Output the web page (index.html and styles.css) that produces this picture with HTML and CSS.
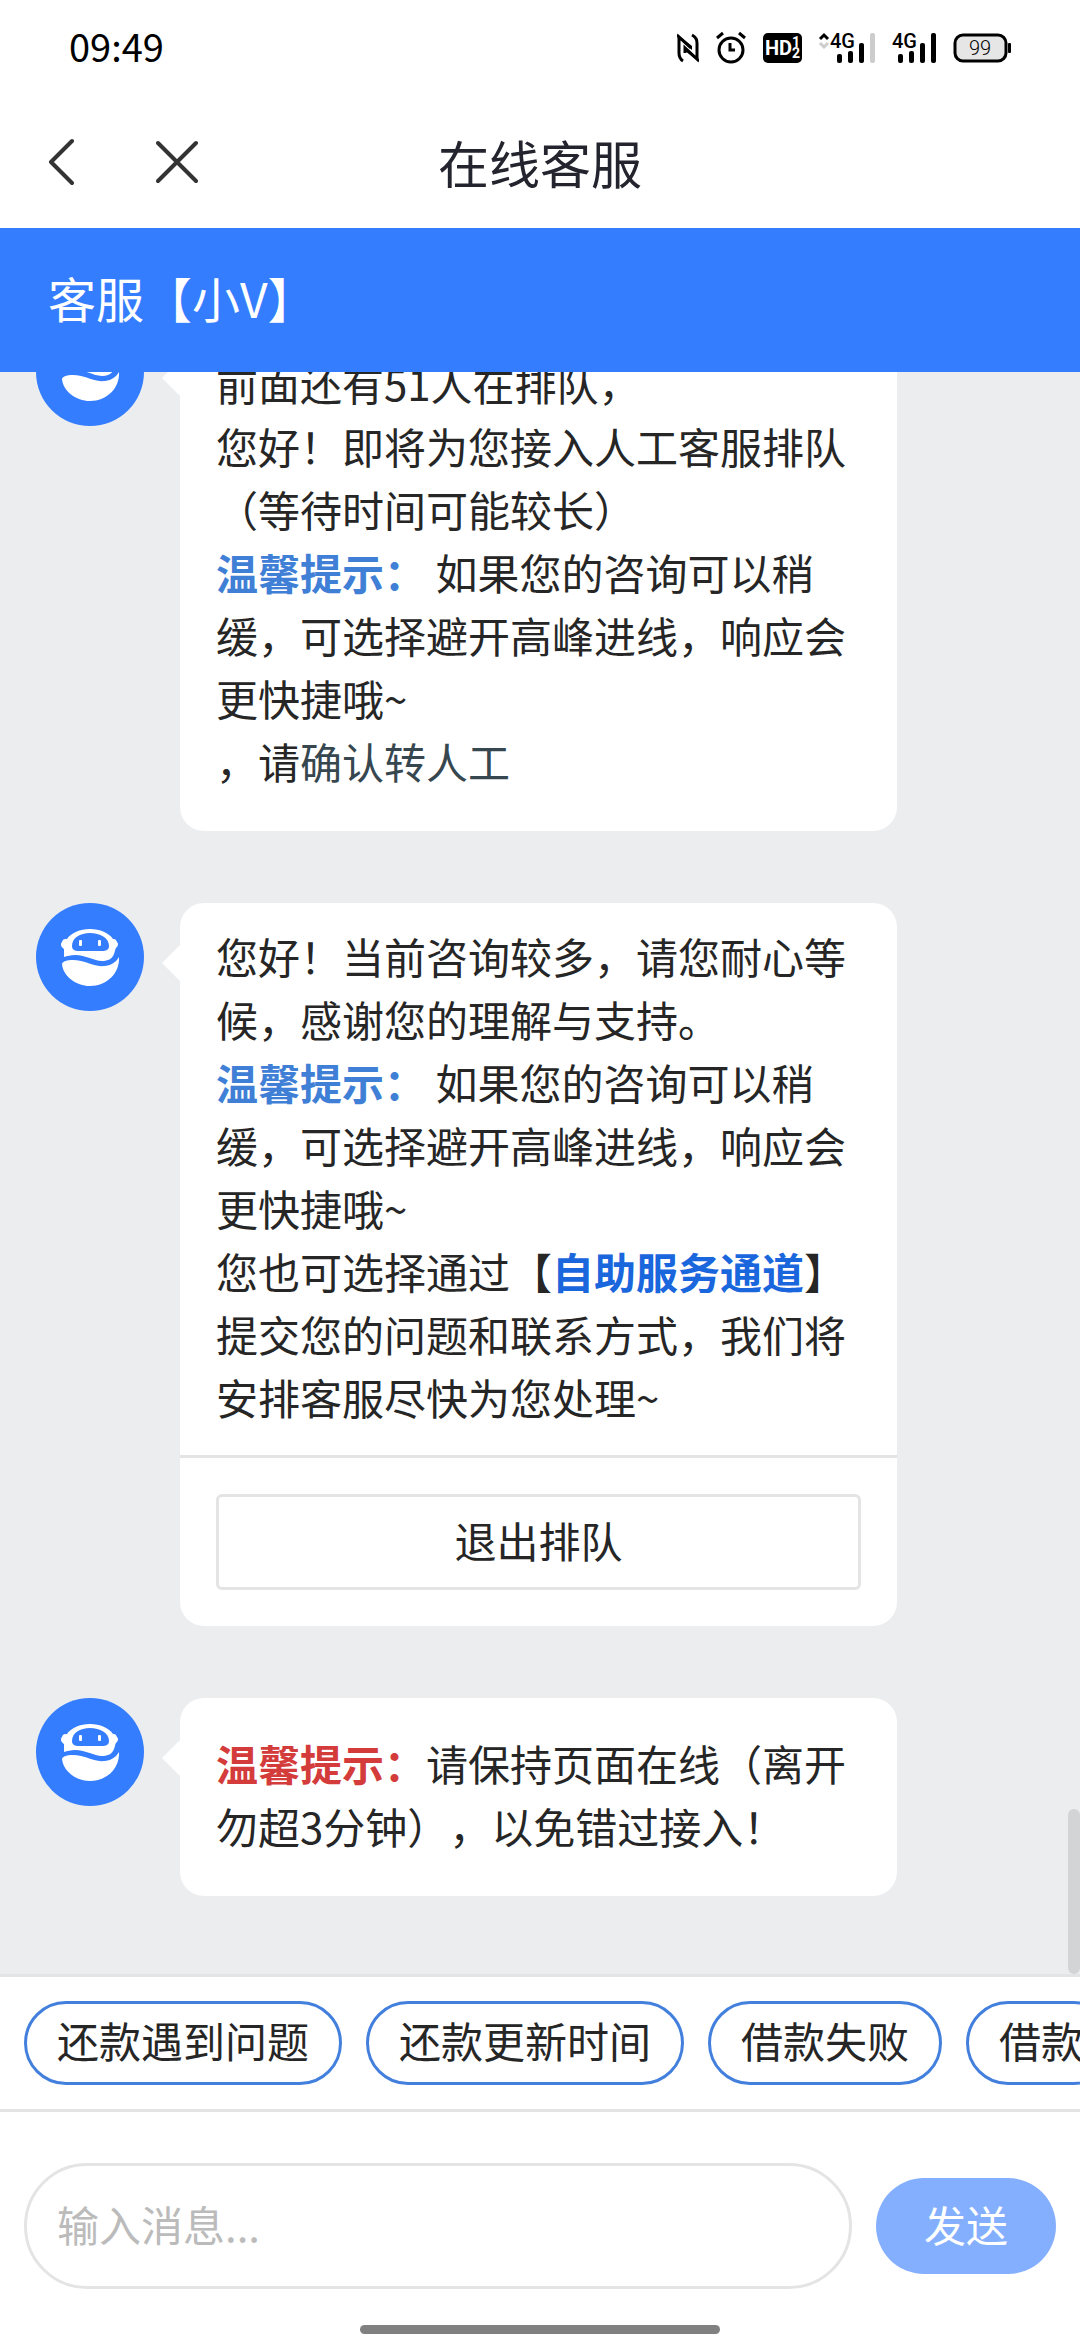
FILE: index.html
```html
<!DOCTYPE html>
<html lang="zh-CN">
<head>
<meta charset="utf-8">
<meta name="viewport" content="width=device-width, initial-scale=1">
<title>在线客服</title>
<link rel="stylesheet" href="styles.css">
</head>
<body>
<svg class="defs" aria-hidden="true">
  <symbol id="robot" viewBox="0 0 108 108">
    <path fill="#fff" fill-rule="evenodd" d="M31 36C35 30 44 26 54 26S73 30 77 36C80 36 80 37 81 39C83 41 82 43 80 45C79 46 79 49 78 51C76 56 72 58 66 58C58 58 50 52 39 52C35 52 31 53 28 54V46C25 44 24 41 26 39C27 36 28 36 31 36ZM54 30C44 30 36 35 36 43C36 47 39 48 43 48H66C70 48 73 47 73 43C73 35 64 30 54 30Z"/>
    <rect x="43" y="37" width="3" height="6" rx="1" fill="#fff"/>
    <rect x="62" y="37" width="3" height="6" rx="1" fill="#fff"/>
    <path fill="#fff" d="M26 61C27 57 37 56 45 58C54 60 60 64 69 63C76 62 80 59 83 54C84 70 71 83 54 83C40 83 27 73 26 61Z"/>
  </symbol>
</svg>
<div class="app">
  <header class="status">
    <span class="clock">09:49</span>
    <div class="status-icons">
      <svg width="22" height="30" viewBox="0 0 22 30"><path d="M6 28C3 26 2 24 2 20V4L14 15M15 2C19 4 20 6 20 10V26L8 15V20" fill="none" stroke="#000" stroke-width="3"/><path d="M0 1L15 13V17L0 4ZM22 29L7 17V13L22 26Z"/></svg>
      <svg width="30" height="32" viewBox="0 0 30 32"><circle cx="15" cy="18" r="12" fill="none" stroke="#000" stroke-width="3"/><path d="M14 11V18H19M1 6L7 1M29 6L23 1" fill="none" stroke="#000" stroke-width="3"/></svg>
      <svg width="39" height="30" viewBox="0 0 39 30"><rect width="39" height="30" rx="5"/><text class="hd" x="2" y="22">HD</text><text class="hd-sub" x="29" y="14">1</text><text class="hd-sub" x="29" y="25">2</text></svg>
      <svg width="56" height="30" viewBox="0 0 56 30"><path d="M1 6L5 2L9 6" fill="none" stroke="#000" stroke-width="3"/><path d="M1 10L5 14L9 10" fill="none" stroke="#ccc" stroke-width="3"/><text class="net" x="11" y="15">4G</text><rect x="18" y="21" width="5" height="9" rx="2"/><rect x="29" y="18" width="5" height="12" rx="2"/><rect x="40" y="10" width="5" height="20" rx="2"/><rect x="51" y="0" width="5" height="30" rx="2" fill="#ccc"/></svg>
      <svg width="44" height="30" viewBox="0 0 44 30"><text class="net" x="0" y="15">4G</text><rect x="6" y="21" width="5" height="9" rx="2"/><rect x="17" y="18" width="5" height="12" rx="2"/><rect x="28" y="10" width="5" height="20" rx="2"/><rect x="39" y="0" width="5" height="30" rx="2"/></svg>
      <svg width="58" height="30" viewBox="0 0 58 30"><rect x="2" y="2" width="51" height="26" rx="8" fill="#e6e6e6" stroke="#000" stroke-width="3"/><rect x="55" y="10" width="3" height="10" rx="1"/><text class="power" x="27" y="22">99</text></svg>
    </div>
  </header>

  <nav class="nav">
    <div class="nav-actions">
      <button class="icon-button" aria-label="返回"><svg width="26" height="48" viewBox="0 0 26 48"><path d="M24 3L3 24L24 45" fill="none" stroke="#333" stroke-width="4" stroke-linecap="round" stroke-linejoin="round"/></svg></button>
      <button class="icon-button" aria-label="关闭"><svg width="42" height="48" viewBox="0 0 42 48"><path d="M2 5L40 43M40 5L2 43" fill="none" stroke="#333" stroke-width="4" stroke-linecap="round"/></svg></button>
    </div>
    <h1 class="title">在线客服</h1>
  </nav>

  <div class="agent">客服【小V】</div>

  <main class="chat">
    <article class="message">
      <svg class="avatar" role="img" aria-label="小V"><use href="#robot"/></svg>
      <div class="bubble">
        <p class="text">前面还有51人在排队，<br>您好！即将为您接入人工客服排队（等待时间可能较长）<br><strong class="tip">温馨提示：</strong> 如果您的咨询可以稍缓，可选择避开高峰进线，响应会更快捷哦~<br>，请<a class="transfer" href="#">确认转人工</a></p>
      </div>
    </article>

    <article class="message">
      <svg class="avatar" role="img" aria-label="小V"><use href="#robot"/></svg>
      <div class="bubble">
        <p class="text text-compact">您好！当前咨询较多，请您耐心等候，感谢您的理解与支持。<br><strong class="tip">温馨提示：</strong> 如果您的咨询可以稍缓，可选择避开高峰进线，响应会更快捷哦~<br>您也可选择通过【<a class="channel" href="#">自助服务通道</a>】提交您的问题和联系方式，我们将安排客服尽快为您处理~</p>
        <div class="bubble-actions"><button class="leave">退出排队</button></div>
      </div>
    </article>

    <article class="message">
      <svg class="avatar" role="img" aria-label="小V"><use href="#robot"/></svg>
      <div class="bubble">
        <p class="text"><strong class="warning">温馨提示：</strong>请保持页面在线（离开勿超3分钟），以免错过接入！</p>
      </div>
    </article>
    <div class="scroll-thumb"></div>
  </main>

  <div class="chips">
    <button class="chip">还款遇到问题</button>
    <button class="chip">还款更新时间</button>
    <button class="chip">借款失败</button>
    <button class="chip">借款</button>
  </div>

  <form class="composer">
    <input class="field" type="text" placeholder="输入消息..." aria-label="输入消息">
    <button class="send" type="button">发送</button>
  </form>
  <div class="home-bar"></div>
</div>
</body>
</html>
```

FILE: styles.css
```css
* {
  box-sizing: border-box;
}

body {
  margin: 0;
  background: #fff;
  color: #262626;
  font-family: "Noto Sans CJK SC", sans-serif;
  font-size: 42px;
  line-height: 63px;
  text-spacing-trim: space-all;
}

button,
input {
  margin: 0;
  font: inherit;
  color: inherit;
}

a {
  text-decoration: none;
}

.defs {
  position: absolute;
  width: 0;
  height: 0;
}

.app {
  display: flex;
  flex-direction: column;
  height: 100vh;
  overflow: hidden;
}

/* Status bar */
.status {
  flex: none;
  display: flex;
  align-items: center;
  justify-content: space-between;
  height: 96px;
  padding: 0 69px;
  color: #000;
}

.clock {
  padding-bottom: 6px;
  font-size: 38px;
}

.status-icons {
  display: flex;
  align-items: center;
  gap: 17px;
}

.status-icons svg {
  overflow: visible;
}

.hd {
  fill: #fff;
  font: 700 20px "Roboto", sans-serif;
}

.hd-sub {
  fill: #fff;
  font: 700 14px "Roboto", sans-serif;
}

.net {
  font: 500 20px "Roboto", sans-serif;
}

.power {
  font: 300 20px "Roboto", sans-serif;
  text-anchor: middle;
}

/* Title bar */
.nav {
  flex: none;
  display: grid;
  grid-template-columns: 1fr auto 1fr;
  align-items: center;
  height: 132px;
  padding: 0 48px;
}

.nav-actions {
  display: flex;
  gap: 82px;
}

.icon-button {
  display: flex;
  padding: 0;
  border: 0;
  background: none;
}

.title {
  margin: 0;
  color: #24242e;
  font-size: 51px;
  font-weight: 400;
}

.agent {
  flex: none;
  padding: 37px 48px 43px;
  background: #347dff;
  color: #fff;
  font-size: 48px;
  line-height: 64px;
}

/* Conversation */
.chat {
  position: relative;
  flex: 1;
  display: flex;
  flex-direction: column;
  justify-content: flex-end;
  gap: 72px;
  min-height: 0;
  padding: 0 183px 78px 36px;
  overflow: hidden;
  background: #ebedef;
}

.message {
  flex: none;
  display: flex;
  align-items: flex-start;
  gap: 36px;
}

.avatar {
  flex: none;
  width: 108px;
  height: 108px;
  border-radius: 50%;
  background: #347dff;
}

.bubble {
  position: relative;
  flex: 1;
  border-radius: 24px;
  background: #fff;
}

.bubble::before {
  content: "";
  position: absolute;
  top: 42px;
  left: -18px;
  border: solid transparent;
  border-width: 18px 18px 18px 0;
  border-right-color: #fff;
}

.text {
  margin: 0;
  padding: 33px 36px 39px;
}

.text-compact {
  padding: 21px 36px 27px;
}

.tip {
  color: #3f80d6;
}

.transfer {
  color: #37474f;
}

.channel {
  color: #1a66dc;
  font-weight: 700;
}

.warning {
  color: #d43c3c;
}

.bubble-actions {
  padding: 36px;
  border-top: 3px solid #e4e4e4;
}

.leave {
  display: block;
  width: 100%;
  height: 96px;
  padding: 0 0 6px;
  border: 3px solid #e4e4e4;
  border-radius: 6px;
  background: #fff;
}

.scroll-thumb {
  position: absolute;
  right: 0;
  bottom: 0;
  width: 12px;
  height: 165px;
  border-radius: 6px;
  background: #d3d4d6;
}

/* Quick questions */
.chips {
  flex: none;
  display: flex;
  gap: 24px;
  padding: 24px;
  overflow: hidden;
  border-top: 3px solid #e4e4e4;
  border-bottom: 3px solid #e4e4e4;
}

.chip {
  flex: none;
  height: 84px;
  padding: 0 30px 6px;
  border: 3px solid #437fdc;
  border-radius: 42px;
  background: #fff;
  line-height: 60px;
}

/* Message entry */
.composer {
  flex: none;
  display: flex;
  align-items: center;
  gap: 24px;
  padding: 51px 24px 36px;
}

.field {
  flex: 1;
  min-width: 0;
  height: 126px;
  padding: 0 30px 6px;
  border: 3px solid #e4e4e4;
  border-radius: 63px;
  background: #fff;
}

.field::placeholder {
  color: #bbb;
}

.send {
  flex: none;
  width: 180px;
  height: 96px;
  padding: 0 0 6px;
  border: 0;
  border-radius: 48px;
  background: #84affe;
  color: #fff;
}

.home-bar {
  flex: none;
  align-self: center;
  width: calc(100% / 3);
  height: 9px;
  margin-bottom: 6px;
  border-radius: 5px;
  background: #808080;
}
```
